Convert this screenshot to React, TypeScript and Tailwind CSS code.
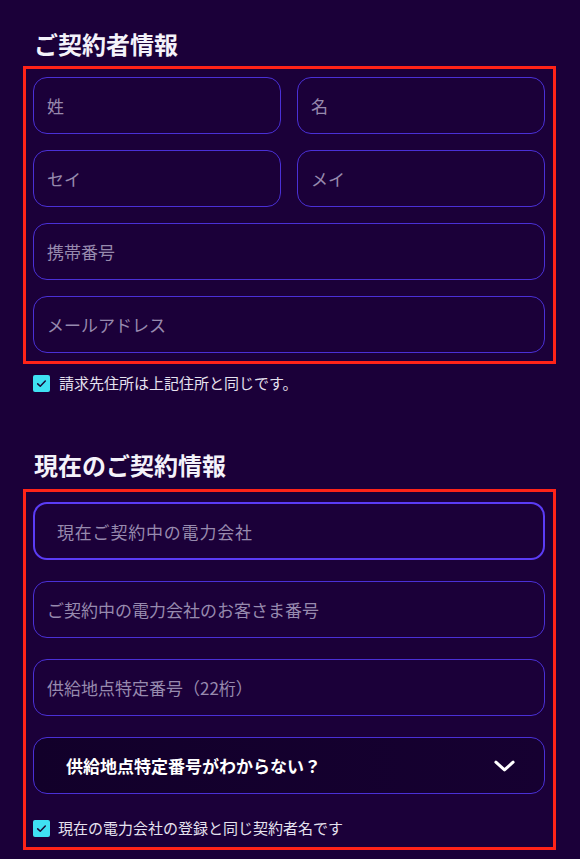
import React from "react";

const font = { fontFamily: '"Noto Sans CJK JP", "Noto Sans", sans-serif' };

function Field({ label, focused = false, h = "h-[57px]" }: { label: string; focused?: boolean; h?: string }) {
  return (
    <div
      className={
        "flex items-center rounded-[14px] " +
        h +
        " " +
        (focused
          ? "border-2 border-[#5b3cf5] pl-[22px]"
          : "border border-[#4a30d6] pl-[13px]")
      }
    >
      <span className={"text-[17px] leading-none text-[#978aae] " + (focused ? "tracking-[0.8px]" : "")}>{label}</span>
    </div>
  );
}

function Check() {
  return (
    <span className="flex h-[17px] w-[17px] shrink-0 items-center justify-center rounded-[2px] bg-[#3fe1f2]">
      <svg viewBox="0 0 16 16" className="h-[11px] w-[11px]" fill="none">
        <path d="M2.5 8.5 L6.2 12 L13.5 4.5" stroke="#1a0a35" strokeWidth="2.2" strokeLinecap="round" strokeLinejoin="round" />
      </svg>
    </span>
  );
}

export default function App() {
  return (
    <div className="min-h-[859px] w-[580px] bg-[#1b0039] pl-[23px] pr-[24px] pt-[29px]" style={font}>
      <h2 className="pl-[11px] text-[24px] font-bold leading-[30px] text-[#f4f2fa]">ご契約者情報</h2>
      <div className="mt-[7px] border-[3px] border-[#ff2418] pl-[7px] pr-[8px] pt-[8px] pb-[8px]">
        <div className="grid grid-cols-2 gap-x-[16px] gap-y-[16px]">
          <Field label="姓" />
          <Field label="名" />
          <Field label="セイ" />
          <Field label="メイ" />
          <div className="col-span-2">
            <Field label="携帯番号" />
          </div>
          <div className="col-span-2">
            <Field label="メールアドレス" />
          </div>
        </div>
      </div>
      <div className="mt-[9px] flex items-center gap-[9px] pl-[10px]">
        <Check />
        <span className="text-[15px] leading-[20px] text-[#e6e2ef]">請求先住所は上記住所と同じです。</span>
      </div>

      <h2 className="mt-[57px] pl-[11px] text-[24px] font-bold leading-[30px] text-[#f4f2fa]">現在のご契約情報</h2>
      <div className="mt-[9px] border-[3px] border-[#ff2418] pl-[7px] pr-[8px] pt-[10px] pb-[9px]">
        <div className="flex flex-col gap-[21px]">
          <Field label="現在ご契約中の電力会社" focused h="h-[58px]" />
          <Field label="ご契約中の電力会社のお客さま番号" />
          <Field label="供給地点特定番号（22桁）" />
          <div className="flex h-[57px] items-center justify-between rounded-[14px] border border-[#4a30d6] bg-gradient-to-r from-[#12002a] to-[#160031] pl-[32px] pr-[29px]">
            <span className="text-[17px] font-bold leading-none text-white">供給地点特定番号がわからない？</span>
            <svg viewBox="0 0 22 12" className="h-[12px] w-[21px]" fill="none">
              <path d="M2 2 L11 10 L20 2" stroke="white" strokeWidth="3.2" strokeLinecap="round" strokeLinejoin="round" />
            </svg>
          </div>
        </div>
        <div className="mt-[24px] flex items-center gap-[8px]">
          <Check />
          <span className="text-[15px] leading-[20px] text-[#e6e2ef]">現在の電力会社の登録と同じ契約者名です</span>
        </div>
      </div>
    </div>
  );
}
